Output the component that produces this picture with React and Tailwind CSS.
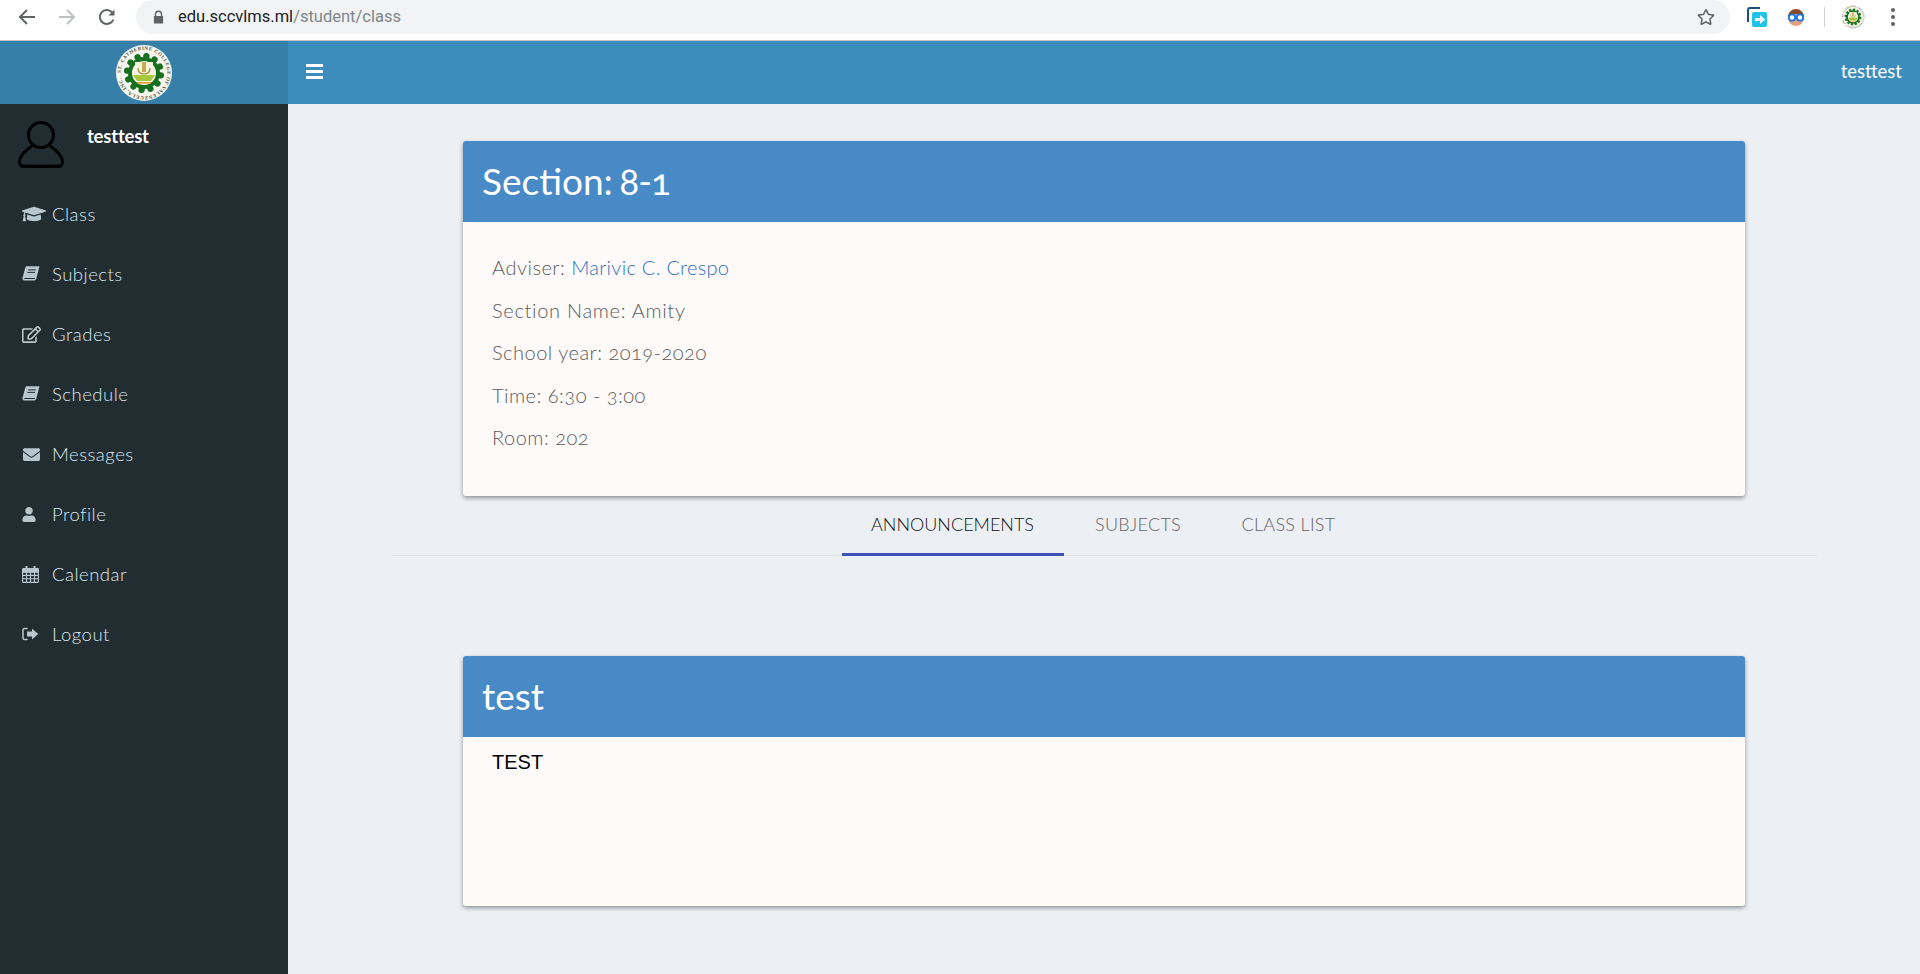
import { FaGraduationCap, FaRegEdit, FaEnvelope, FaUser, FaRegStar } from 'react-icons/fa'

const FONT = 'font-["Lato","Open_Sans",sans-serif]'
const LOBES = [0, 1, 2, 3, 4, 5, 6, 7, 8, 9, 10, 11]

function BookIcon() {
  return (
    <svg viewBox="0 0 18 16" className="w-[18px] h-[16px]" fill="currentColor">
      <path d="M4.6 0.3H17.4l-.2 1.2-3 11.6c-.2.9-.9 1.4-1.8 1.4H2.4C1 14.500 .2 13.400 .5 12L3.300 1.600C3.500.8 4 .3 4.600.3z" />
      <path d="M2.400 12h10.600l-.3 1H2.600c-.5 0-.5-1-.2-1z" fill="#222d32" />
      <rect x="6.200" y="3.400" width="7.500" height="1" fill="#222d32" />
      <rect x="5.500" y="5.900" width="7.500" height="1" fill="#222d32" />
    </svg>
  )
}

function CalendarIcon() {
  return (
    <svg viewBox="0 0 17 17" className="w-[17px] h-[17px]" fill="none" stroke="currentColor" strokeWidth="1.1">
      <rect x="0.6" y="2.6" width="15.8" height="13.8" rx="1" />
      <path d="M0.6 6.2h15.8M0.6 9.4h15.8M0.6 12.8h15.8M4.5 6.2v10.2M8.5 6.2v10.2M12.5 6.2v10.2" />
      <path d="M0.6 3h15.8v3H.6z" fill="currentColor" />
      <path d="M4.5 0.8v3M12.5 0.8v3" strokeWidth="2" strokeLinecap="round" />
    </svg>
  )
}

function LogoutIcon() {
  return (
    <svg viewBox="0 0 17 14" className="w-[17px] h-[14px]" fill="currentColor">
      <path d="M5 1.5H2.6C1.7 1.5 1 2.2 1 3.1v7.8c0 .9.7 1.6 1.6 1.6H5" fill="none" stroke="currentColor" strokeWidth="1.5" strokeLinecap="round" />
      <path d="M10 1.4L16.2 7 10 12.6V9.4H5V4.6h5z" />
    </svg>
  )
}

function Logo({ size }) {
  return (
    <svg viewBox="0 0 56 56" width={size} height={size}>
      <defs>
        <path id="ring" d="M28 28 m-23.200 0 a23.200 23.200 0 1 1 46.400 0 a23.200 23.200 0 1 1 -46.400 0" />
      </defs>
      <circle cx="28" cy="28" r="28" fill="#f7f7f0" />
      <text fontSize="5" fontFamily="Liberation Serif, serif" fontWeight="700" fill="#4a5240" textLength="140">
        <textPath href="#ring">ST. CATHERINE COLLEGE OF VALENZUELA, INC.</textPath>
      </text>
      <circle cx="28" cy="28" r="14" fill="none" stroke="#17701d" strokeWidth="4" />
      <g fill="#17701d" stroke="#17701d" strokeWidth="2">
        {LOBES.map((n) => (
          <g key={n} transform={`rotate(${n * 30 + 8} 28 28)`}>
            <line x1="28" y1="14" x2="28" y2="11" />
            <circle cx="28" cy="11" r="2.200" />
          </g>
        ))}
      </g>
      <rect x="19" y="17" width="18" height="16" fill="#f6f4df" />
      <path d="M26 17h4v10h-4z" fill="#b59b2e" opacity="0.8" />
      <path d="M22 23c0 5 3 6 6 6s6-1 6-6" fill="none" stroke="#9c8a2a" strokeWidth="1.200" />
      <path d="M17 30h22l-4 6H21z" fill="#a7c93a" />
      <path d="M21 37h14v1.600H21z" fill="#e39a1f" />
    </svg>
  )
}

function ChromeBar() {
  return (
    <div className="h-[41px] bg-white border-b border-[#c4c4c4] flex items-start">
      <div className="w-[136px] h-[34px] shrink-0 flex items-center">
        <svg viewBox="0 0 18 18" className="w-[18px] h-[18px] ml-[18px]" fill="none" stroke="#5f6368" strokeWidth="2">
          <path d="M17 9H2M9 2L2 9l7 7" />
        </svg>
        <svg viewBox="0 0 18 18" className="w-[18px] h-[18px] ml-[22px]" fill="none" stroke="#bdc1c6" strokeWidth="2">
          <path d="M1 9h15M9 2l7 7-7 7" />
        </svg>
        <svg viewBox="0 0 18 18" className="w-[18px] h-[18px] ml-[22px]" fill="none" stroke="#5f6368" strokeWidth="2">
          <path d="M15.400 11.500A7 7 0 1 1 14 4.200" />
          <path d="M16.500 1.500v6h-6z" fill="#5f6368" stroke="none" />
        </svg>
      </div>
      <div className="w-[1594px] h-[34px] bg-[#f1f3f4] rounded-[17px] flex items-center pl-[17px] pr-[15px]">
        <svg viewBox="0 0 12 14" className="w-[11px] h-[14px]" fill="#5f6368">
          <path d="M2 6V4a4 4 0 0 1 8 0v2h1v8H1V6zm1.500 0h5V4a2.500 2.500 0 0 0-5 0z" />
        </svg>
        <span className="ml-[14px] text-[16.500px] text-[#202124] font-['Roboto',sans-serif]">
          edu.sccvlms.ml<span className="text-[#80868b]">/student/class</span>
        </span>
        <FaRegStar className="ml-auto w-[18px] h-[18px] text-[#5f6368]" />
      </div>
      <div className="flex items-center flex-1 h-[34px]">
        <svg viewBox="0 0 20 20" className="w-[20px] h-[20px] ml-[17px]">
          <path d="M1 15V3c0-1 .8-2 2-2h10" fill="none" stroke="#1c4f7c" strokeWidth="2" />
          <rect x="5" y="5" width="15" height="15" rx="2" fill="#22c3e8" />
          <path d="M8 11h5V8l5 4.500-5 4.500v-3H8z" fill="#fff" />
        </svg>
        <svg viewBox="0 0 20 20" className="w-[20px] h-[20px] ml-[19px]">
          <circle cx="10" cy="11" r="8" fill="#e0a080" />
          <path d="M2 10a8 8 0 0 1 16 0l-3-3H5z" fill="#8a4a28" />
          <circle cx="6" cy="10.500" r="3.200" fill="#fff" stroke="#1a73e8" strokeWidth="1.800" />
          <circle cx="14" cy="10.500" r="3.200" fill="#fff" stroke="#1a73e8" strokeWidth="1.800" />
        </svg>
        <div className="w-px h-[20px] bg-[#cfd1d3] ml-[18px]" />
        <div className="ml-[16px] flex"><Logo size={24} /></div>
        <div className="ml-[26px] flex flex-col gap-[3px]">
          <span className="w-[4px] h-[4px] rounded-full bg-[#5f6368]" />
          <span className="w-[4px] h-[4px] rounded-full bg-[#5f6368]" />
          <span className="w-[4px] h-[4px] rounded-full bg-[#5f6368]" />
        </div>
      </div>
    </div>
  )
}

const menu = [
  { label: 'Class', icon: <FaGraduationCap className="w-[24px] h-[20px]" /> },
  { label: 'Subjects', icon: <BookIcon /> },
  { label: 'Grades', icon: <FaRegEdit className="w-[19px] h-[17px]" /> },
  { label: 'Schedule', icon: <BookIcon /> },
  { label: 'Messages', icon: <FaEnvelope className="w-[19px] h-[17px]" /> },
  { label: 'Profile', icon: <FaUser className="w-[14px] h-[15px]" /> },
  { label: 'Calendar', icon: <CalendarIcon /> },
  { label: 'Logout', icon: <LogoutIcon /> },
]

function Sidebar() {
  return (
    <aside className="w-[288px] shrink-0 bg-[#222d32] flex flex-col">
      <div className="h-[63px] bg-[#367fa9] flex justify-center items-center pt-px">
        <Logo size={56} />
      </div>
      <div className="h-[80px] flex pl-[18px] pt-[16px]">
        <svg viewBox="0 0 46 48" className="w-[46px] h-[48px]" fill="none" stroke="#000" strokeWidth="3">
          <circle cx="23" cy="15" r="12.500" />
          <path d="M14 26C8 30 1.500 35 1.500 42c0 3 2 4.500 4 4.500h35c2 0 4-1.500 4-4.500 0-7-6.500-12-12.500-16" />
          <path d="M4 46h38" strokeWidth="3" />
        </svg>
        <span className="ml-[23px] mt-[3px] text-[18.500px] font-bold text-white tracking-[-0.2px]">testtest</span>
      </div>
      <nav className="flex flex-col">
        {menu.map((item) => (
          <a key={item.label} className="h-[60px] flex items-center pl-[22px] text-[#dbe8ef] text-[18.500px] tracking-[0.5px] font-light">
            <span className="w-[30px] flex text-[#b8c7ce]">{item.icon}</span>
            <span className="mt-[1px]">{item.label}</span>
          </a>
        ))}
      </nav>
    </aside>
  )
}

function Card({ title, titleClass, bodyClass, children }) {
  return (
    <section className="w-[1282px] rounded-[3px] overflow-hidden shadow-[0_2px_4px_rgba(0,0,0,0.4)] bg-[#fffafa]">
      <div className={`h-[81px] bg-[#478ac6] flex items-center pl-[19px] pb-[2px] text-white font-normal ${titleClass}`}>{title}</div>
      <div className={bodyClass}>{children}</div>
    </section>
  )
}

export default function App() {
  return (
    <div className={`h-[974px] w-[1920px] overflow-hidden flex flex-col bg-[#ecf0f5] ${FONT}`}>
      <ChromeBar />
      <div className="flex flex-1 min-h-0">
        <Sidebar />
        <div className="flex-1 flex flex-col min-w-0">
          <header className="h-[63px] shrink-0 bg-[#3c8dbc] flex items-center justify-between pl-[18px] pr-[18px] pb-[2px] text-white">
            <div className="flex flex-col gap-[3px]">
              <span className="w-[17px] h-[3px] bg-white" />
              <span className="w-[17px] h-[3px] bg-white" />
              <span className="w-[17px] h-[3px] bg-white" />
            </div>
            <span className="text-[18.500px]">testtest</span>
          </header>
          <main className="flex-1 flex flex-col items-center pt-[37px] oldstyle-nums">
            <Card
              title={<>Section:&nbsp;<span className="ml-[-3px] tracking-[-1px]">8-1</span></>}
              titleClass="text-[37px]"
              bodyClass="h-[274px] pt-[24px] pl-[29px] text-[20px] font-light text-[#5c5c5c] tracking-[0.5px]"
            >
              <p className="h-[42.500px] flex items-center">Adviser:&nbsp;<a className="text-[#2a72c0] tracking-[0.3px]">Marivic C. Crespo</a></p>
              <p className="h-[42.500px] flex items-center tracking-[0.7px]">Section Name: Amity</p>
              <p className="h-[42.500px] flex items-center">School year: 2019-2020</p>
              <p className="h-[42.500px] flex items-center">Time: 6:30 - 3:00</p>
              <p className="h-[42.500px] flex items-center">Room: 202</p>
            </Card>
            <div className="w-[1425px] h-[60px] border-b border-[#dfe3e8] flex justify-center pr-[2px] text-[18px] font-light shrink-0">
              <div className="h-[60px] w-[222px] border-b-[3px] border-b-[#3f51b5] flex items-center justify-center text-[#111]">ANNOUNCEMENTS</div>
              <div className="h-[60px] w-[149px] border-b-[3px] border-transparent flex items-center justify-center text-[#666] tracking-[0.3px]">SUBJECTS</div>
              <div className="h-[60px] w-[152px] border-b-[3px] border-transparent flex items-center justify-center text-[#666] tracking-[0.3px]">CLASS LIST</div>
            </div>
            <div className="h-[100px] shrink-0" />
            <Card title="test" titleClass="text-[37px]" bodyClass="h-[169px] pl-[29px] pt-[12px]">
              <p className="font-['Liberation_Sans',sans-serif] text-[20px] leading-[26px] text-black">TEST</p>
            </Card>
          </main>
        </div>
      </div>
    </div>
  )
}
